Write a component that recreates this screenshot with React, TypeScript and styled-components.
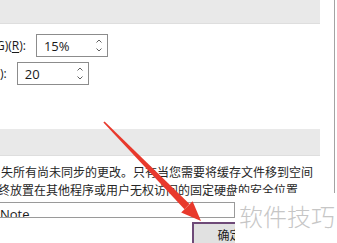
import React from "react";
import styled, { createGlobalStyle } from "styled-components";

const Global = createGlobalStyle`
  html, body { margin: 0; padding: 0; background: #fff; overflow: hidden; }
  #root { width: 337px; height: 243px; }
`;

const Frame = styled.div`
  position: relative;
  width: 337px;
  height: 243px;
  overflow: hidden;
  background: #fff;
  display: flex;
`;

const Pane = styled.div`
  width: 335px;
  box-sizing: border-box;
  border-right: 1px solid #a3a3a3;
  display: flex;
  flex-direction: column;
  flex-shrink: 0;
`;

const Band = styled.div<{ $h: number; $mt?: number }>`
  width: 320px;
  height: ${(p) => p.$h}px;
  margin-top: ${(p) => p.$mt ?? 0}px;
  background: #e9e9e9;
  border-bottom: 1px solid #dedede;
  flex-shrink: 0;
`;

const Row = styled.div<{ $mt: number }>`
  display: flex;
  align-items: center;
  gap: 10px;
  height: 23px;
  margin-top: ${(p) => p.$mt}px;
  flex-shrink: 0;
`;

const Label = styled.span<{ $ml: number }>`
  font-family: "Open Sans", "Noto Sans", sans-serif;
  font-size: 12px;
  color: #1a1a1a;
  margin-left: ${(p) => p.$ml}px;
  white-space: nowrap;
  u { text-decoration-thickness: 1px; text-underline-offset: 2px; }
`;

const SpinBox = styled.div`
  width: 72px;
  height: 23px;
  box-sizing: border-box;
  border: 1px solid #8c8c8c;
  display: flex;
  align-items: center;
  justify-content: space-between;
  padding: 0 5px 0 7px;
  background: #fff;
`;

const Value = styled.span`
  font-family: "Open Sans", "Noto Sans", sans-serif;
  font-size: 13px;
  color: #1a1a1a;
`;

const Arrows = styled.div`
  display: flex;
  flex-direction: column;
  gap: 5px;
  svg { display: block; }
`;

const TextBlock = styled.div`
  margin-top: 7px;
  margin-left: -2px;
  font-family: "Noto Sans CJK SC", "Noto Sans", sans-serif;
  font-size: 12px;
  line-height: 18px;
  color: #262626;
  white-space: nowrap;
  flex-shrink: 0;
`;

const Line = styled.div<{ $indent?: number }>`
  padding-left: ${(p) => p.$indent ?? 0}px;
`;

const PathInput = styled.div`
  margin-top: 3px;
  margin-left: -5px;
  width: 240px;
  height: 16px;
  box-sizing: border-box;
  border: 1px solid #9a9a9a;
  overflow: hidden;
  flex-shrink: 0;
  font-family: "Open Sans", "Noto Sans", sans-serif;
  font-size: 13px;
  line-height: 13px;
  color: #1a1a1a;
  padding-top: 5px;
  padding-left: 4px;
`;

const ButtonRow = styled.div`
  display: flex;
  padding-left: 192px;
  margin-top: 4px;
  flex-shrink: 0;
`;

const Button = styled.div`
  width: 75px;
  height: 24px;
  box-sizing: border-box;
  border: 2px solid #6e4a78;
  background: #e1e1e1;
  display: flex;
  align-items: center;
  justify-content: center;
  font-family: "Noto Sans CJK SC", "Noto Sans", sans-serif;
  font-size: 12px;
  color: #1a1a1a;
`;

const Overlay = styled.svg`
  position: absolute;
  left: 0;
  top: 0;
  pointer-events: none;
`;

const Watermark = styled.div`
  position: absolute;
  right: 0;
  bottom: 0;
  width: 102px;
  height: 50px;
  background: #fff;
  display: flex;
  justify-content: center;
  align-items: flex-start;
  padding-top: 8px;
  padding-left: 2px;
  box-sizing: border-box;
  font-family: "Noto Sans CJK SC", sans-serif;
  font-weight: 300;
  font-size: 24px;
  line-height: 30px;
  color: #c6c6c6;
  white-space: nowrap;
`;

const Up = () => (
  <svg width="6" height="4" viewBox="0 0 6 4">
    <path d="M0.5 3.5 L3 1 L5.5 3.5" fill="none" stroke="#606060" strokeWidth="1" />
  </svg>
);
const Down = () => (
  <svg width="6" height="4" viewBox="0 0 6 4">
    <path d="M0.5 0.5 L3 3 L5.5 0.5" fill="none" stroke="#606060" strokeWidth="1" />
  </svg>
);

const Spin = ({ value }: { value: string }) => (
  <SpinBox>
    <Value>{value}</Value>
    <Arrows>
      <Up />
      <Down />
    </Arrows>
  </SpinBox>
);

export default function App() {
  return (
    <>
      <Global />
      <Frame>
        <Pane>
          <Band $h={23} />
          <Row $mt={10}>
            <Label $ml={-4}>
              G)(<u>R</u>):
            </Label>
            <Spin value="15%" />
          </Row>
          <Row $mt={5}>
            <Label $ml={0}>):</Label>
            <Spin value="20" />
          </Row>
          <Band $h={26} $mt={44} />
          <TextBlock>
            <Line $indent={3}>失所有尚未同步的更改。只有当您需要将缓存文件移到空间</Line>
            <Line>终放置在其他程序或用户无权访问的固定硬盘的安全位置</Line>
          </TextBlock>
          <PathInput>Note</PathInput>
          <ButtonRow>
            <Button>确定</Button>
          </ButtonRow>
        </Pane>
        <Overlay width="337" height="243" viewBox="0 0 337 243">
          <polygon
            points="103.4,122.6 104.6,121.4 189.5,204 184.5,209.2"
            fill="#e8392c"
          />
          <polygon points="201,221 181.2,212.4 192.6,201.2" fill="#e8392c" />
        </Overlay>
        <Watermark>软件技巧</Watermark>
      </Frame>
    </>
  );
}
